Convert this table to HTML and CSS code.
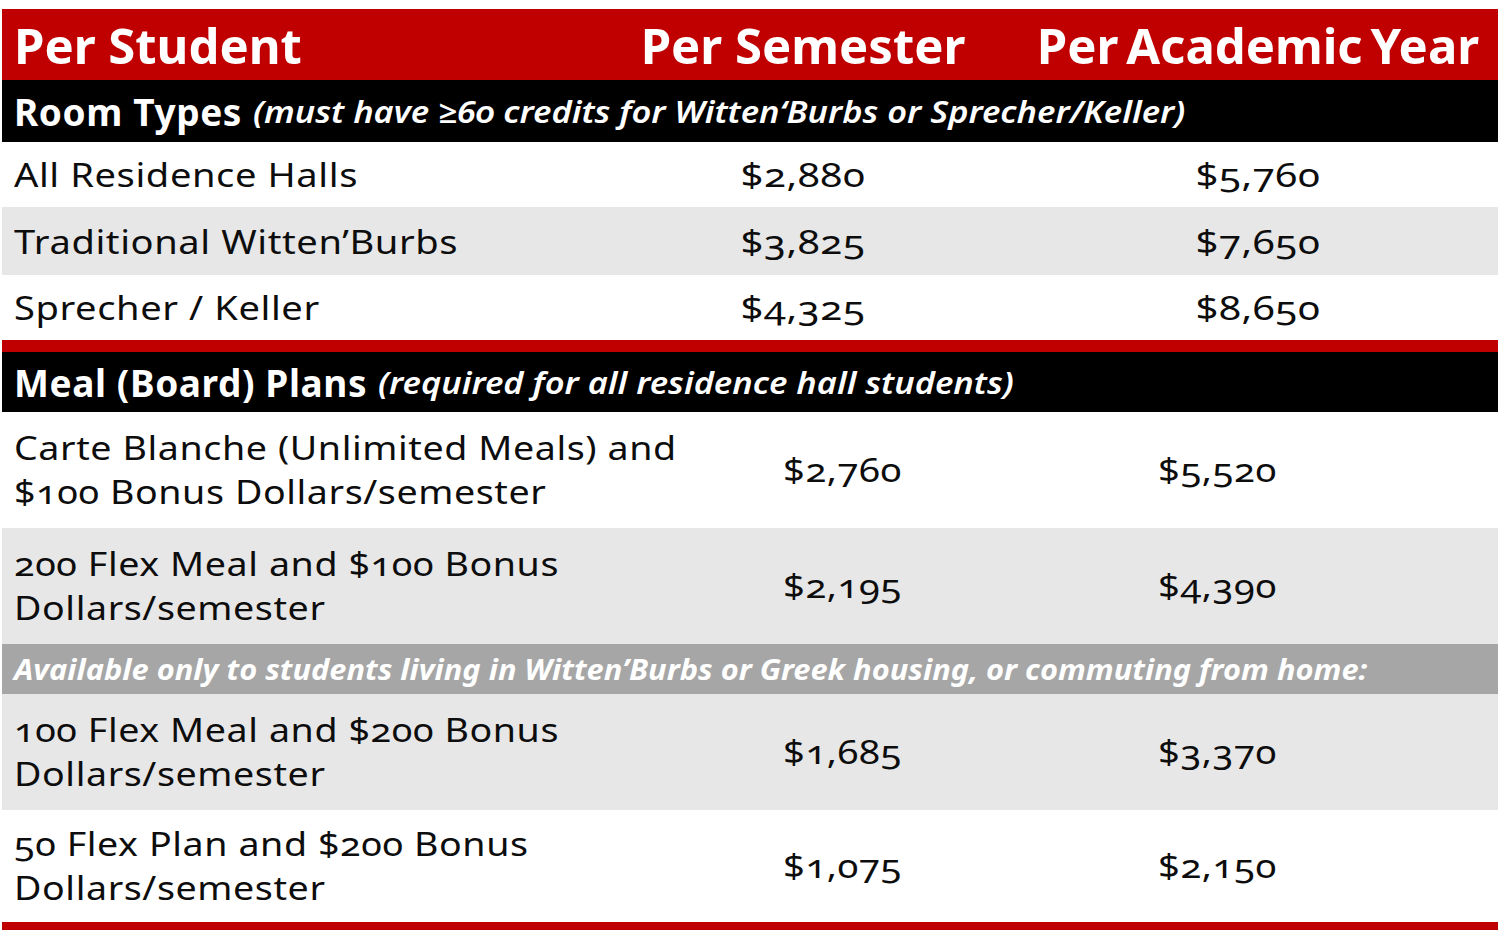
FILE: index.html
```html
<!DOCTYPE html>
<html>
<head>
<meta charset="utf-8">
<link rel="stylesheet" href="styles.css">
</head>
<body>
<div class="sheet">
  <div class="row grid1 head">
    <div class="lab">Per Student</div>
    <div class="mid">Per Semester</div>
    <div class="end year">Per Academic Year</div>
  </div>
  <div class="band band-room"><b>Room Types</b><em>(must have ≥60 credits for Witten‘Burbs or Sprecher/Keller)</em></div>
  <div class="row grid1 room r1">
    <div class="lab"><span class="t">All Residence Halls</span></div>
    <div class="mid num"><span class="t">$2,880</span></div>
    <div class="end num"><span class="t">$5,760</span></div>
  </div>
  <div class="row grid1 room r2 shade">
    <div class="lab"><span class="t">Traditional Witten’Burbs</span></div>
    <div class="mid num"><span class="t">$3,825</span></div>
    <div class="end num"><span class="t">$7,650</span></div>
  </div>
  <div class="row grid1 room r3">
    <div class="lab"><span class="t">Sprecher / Keller</span></div>
    <div class="mid num"><span class="t">$4,325</span></div>
    <div class="end num"><span class="t">$8,650</span></div>
  </div>
  <div class="redbar"></div>
  <div class="band band-meal"><b>Meal (Board) Plans</b><em>(required for all residence hall students)</em></div>
  <div class="row grid2 meal m1">
    <div class="lab"><span class="t">Carte Blanche (Unlimited Meals) and<br>$100 Bonus Dollars/semester</span></div>
    <div class="num"><span class="t">$2,760</span></div>
    <div class="num"><span class="t">$5,520</span></div>
  </div>
  <div class="row grid2 meal m2 shade">
    <div class="lab"><span class="t">200 Flex Meal and $100 Bonus<br>Dollars/semester</span></div>
    <div class="num"><span class="t">$2,195</span></div>
    <div class="num"><span class="t">$4,390</span></div>
  </div>
  <div class="note"><span class="t">Available only to students living in Witten’Burbs or Greek housing, or commuting from home:</span></div>
  <div class="row grid2 meal m3 shade">
    <div class="lab"><span class="t">100 Flex Meal and $200 Bonus<br>Dollars/semester</span></div>
    <div class="num"><span class="t">$1,685</span></div>
    <div class="num"><span class="t">$3,370</span></div>
  </div>
  <div class="row grid2 meal m4">
    <div class="lab"><span class="t">50 Flex Plan and $200 Bonus<br>Dollars/semester</span></div>
    <div class="num"><span class="t">$1,075</span></div>
    <div class="num"><span class="t">$2,150</span></div>
  </div>
  <div class="redline"></div>
</div>
</body>
</html>
```

FILE: styles.css
```css
html, body {
  margin: 0;
  padding: 0;
  background: #ffffff;
}

body {
  font-family: "Noto Sans", "Open Sans", sans-serif;
  font-variant-numeric: oldstyle-nums;
  font-feature-settings: "onum" 1;
  color: #0d0d0d;
}

.sheet {
  padding-top: 9px;
  margin-left: 2px;
  width: 1496px;
}

.row {
  display: grid;
  align-items: center;
  white-space: nowrap;
}

.grid1 {
  grid-template-columns: 638px 326px 1fr;
}

.grid1 .mid {
  text-align: center;
}

.grid1 .end {
  padding-left: 52px;
  text-align: center;
}

.grid2 {
  grid-template-columns: 781px 375px 1fr;
}

.lab {
  padding-left: 12px;
}

.t {
  display: inline-block;
  transform-origin: left center;
}

.head {
  background: #c00000;
  color: #ffffff;
  height: 71px;
  font-weight: 700;
  font-size: 49px;
}

.head .year {
  word-spacing: -5px;
}

.band {
  background: #000000;
  color: #ffffff;
  display: flex;
  align-items: center;
  padding-left: 12px;
  white-space: nowrap;
}

.band b {
  font-weight: 700;
  font-size: 37px;
  letter-spacing: 0.6px;
}

.band em {
  display: inline-block;
  margin-left: 11px;
  font-style: italic;
  font-weight: 600;
  font-size: 31px;
  transform: scaleX(1.11);
  transform-origin: left center;
}

.band-room {
  height: 62px;
}

.band-meal {
  height: 60px;
}

.room,
.meal {
  font-size: 32px;
  letter-spacing: 0.5px;
}

.room .lab .t {
  transform: scaleX(1.19);
}

.meal .lab .t {
  transform: scaleX(1.175);
}

.room .num .t {
  transform: scaleX(1.25);
  transform-origin: center center;
}

.meal .num .t {
  transform: scaleX(1.19);
}

.r1 { height: 65px; }
.r2 { height: 68px; }
.r3 { height: 65px; }

.shade {
  background: #e7e7e7;
}

.redbar {
  height: 12px;
  background: #c00000;
}

.meal {
  line-height: 44px;
}

.m1, .m2, .m3 { height: 116px; }
.m4 { height: 112px; }

.note {
  height: 50px;
  background: #a6a6a6;
  color: #ffffff;
  font-style: italic;
  font-weight: 700;
  font-size: 28px;
  display: flex;
  align-items: center;
  padding-left: 12px;
  white-space: nowrap;
}

.note .t {
  transform: scaleX(1.1);
}

.redline {
  height: 8px;
  background: #c00000;
}
```
